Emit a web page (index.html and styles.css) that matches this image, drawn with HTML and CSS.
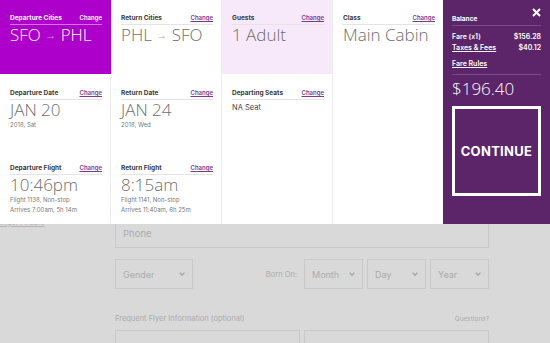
FILE: index.html
```html
<!DOCTYPE html>
<html lang="en">
<head>
    <meta charset="UTF-8">
    <meta name="viewport" content="width=device-width, initial-scale=1.0">
    <title>Trip Summary</title>
    <link rel="stylesheet" href="styles.css">
</head>
<body>
    <!-- Page underneath the summary -->
    <div class="page">
        <div class="side">
            <a class="lang-link">Settings: Arabic</a>
        </div>
        <div class="form">
            <div class="field">Phone</div>
            <div class="form-row">
                <div class="field select gender">Gender
                    <svg width="6" height="4" viewBox="0 0 6 4"><polyline points="0.6,0.6 3,3.2 5.4,0.6" fill="none" stroke="#a3a3a3" stroke-width="1.3"/></svg>
                </div>
                <span class="born">Born On:</span>
                <div class="field select date-select">Month
                    <svg width="6" height="4" viewBox="0 0 6 4"><polyline points="0.6,0.6 3,3.2 5.4,0.6" fill="none" stroke="#a3a3a3" stroke-width="1.3"/></svg>
                </div>
                <div class="field select date-select">Day
                    <svg width="6" height="4" viewBox="0 0 6 4"><polyline points="0.6,0.6 3,3.2 5.4,0.6" fill="none" stroke="#a3a3a3" stroke-width="1.3"/></svg>
                </div>
                <div class="field select date-select">Year
                    <svg width="6" height="4" viewBox="0 0 6 4"><polyline points="0.6,0.6 3,3.2 5.4,0.6" fill="none" stroke="#a3a3a3" stroke-width="1.3"/></svg>
                </div>
            </div>
            <div class="ff-head">
                <span class="ff-label">Frequent Flyer Information (optional)</span>
                <span class="ff-help">Questions?</span>
            </div>
            <div class="ff-row">
                <div class="field half"></div>
                <div class="field half"></div>
            </div>
        </div>
    </div>

    <!-- Trip summary overlay -->
    <div class="summary">
        <div class="trip-grid">
            <div class="cell cell-active">
                <div class="cell-head"><span class="cell-label">Departure Cities</span><a class="cell-change">Change</a></div>
                <div class="cell-value">SFO <span class="arrow">&rarr;</span> PHL</div>
            </div>
            <div class="cell">
                <div class="cell-head"><span class="cell-label">Return Cities</span><a class="cell-change">Change</a></div>
                <div class="cell-value">PHL <span class="arrow">&rarr;</span> SFO</div>
            </div>
            <div class="cell cell-soft">
                <div class="cell-head"><span class="cell-label">Guests</span><a class="cell-change">Change</a></div>
                <div class="cell-value">1 Adult</div>
            </div>
            <div class="cell">
                <div class="cell-head"><span class="cell-label">Class</span><a class="cell-change">Change</a></div>
                <div class="cell-value">Main Cabin</div>
            </div>

            <div class="cell">
                <div class="cell-head"><span class="cell-label">Departure Date</span><a class="cell-change">Change</a></div>
                <div class="cell-value">JAN 20</div>
                <div class="cell-note">2018, Sat</div>
            </div>
            <div class="cell">
                <div class="cell-head"><span class="cell-label">Return Date</span><a class="cell-change">Change</a></div>
                <div class="cell-value">JAN 24</div>
                <div class="cell-note">2018, Wed</div>
            </div>
            <div class="cell">
                <div class="cell-head"><span class="cell-label">Departing Seats</span><a class="cell-change">Change</a></div>
                <div class="cell-text">NA Seat</div>
            </div>
            <div class="cell"></div>

            <div class="cell">
                <div class="cell-head"><span class="cell-label">Departure Flight</span><a class="cell-change">Change</a></div>
                <div class="cell-value">10:46pm</div>
                <div class="cell-note">Flight 1138, Non-stop</div>
                <div class="cell-note">Arrives 7:00am, 5h 14m</div>
            </div>
            <div class="cell">
                <div class="cell-head"><span class="cell-label">Return Flight</span><a class="cell-change">Change</a></div>
                <div class="cell-value">8:15am</div>
                <div class="cell-note">Flight 1141, Non-stop</div>
                <div class="cell-note">Arrives 11:40am, 6h 25m</div>
            </div>
            <div class="cell"></div>
            <div class="cell"></div>
        </div>

        <aside class="balance">
            <div class="balance-head">
                <span class="balance-title">Balance</span>
                <svg class="close" width="9" height="9" viewBox="0 0 9 9"><path d="M1 1 L8 8 M8 1 L1 8" stroke="#fff" stroke-width="2"/></svg>
            </div>
            <div class="fares">
                <div class="fare-row"><span>Fare (x1)</span><span>$156.28</span></div>
                <div class="fare-row"><a class="fare-link">Taxes &amp; Fees</a><span>$40.12</span></div>
                <div class="fare-row fare-rules"><a class="fare-link">Fare Rules</a></div>
            </div>
            <div class="total">$196.40</div>
            <button class="continue">CONTINUE</button>
        </aside>
    </div>
</body>
</html>
```

FILE: styles.css
```css
/* Basic Reset */
* {
    margin: 0;
    padding: 0;
    box-sizing: border-box;
}

body {
    font-family: Inter, 'Open Sans', sans-serif;
    background: #d9d9d9;
    width: 550px;
    height: 343px;
    overflow: hidden;
    position: relative;
}

/* Page underneath */
.page {
    display: flex;
    padding-top: 218px;
}

.side {
    width: 115px;
    overflow: hidden;
}

.lang-link {
    display: block;
    margin-left: -15px;
    margin-top: -1px;
    font-size: 8px;
    line-height: 10px;
    color: #b3b3b3;
    text-decoration: underline;
    white-space: nowrap;
}

.form {
    width: 374px;
}

.field {
    height: 30px;
    border: 1px solid #c9c9c9;
    display: flex;
    align-items: center;
    padding: 0 7px;
    font-size: 9.5px;
    color: #ababab;
}

.select {
    justify-content: space-between;
    font-size: 9px;
}

.form-row {
    display: flex;
    align-items: center;
    gap: 4px;
    margin-top: 11px;
}

.gender {
    width: 78px;
    margin-right: auto;
}

.born {
    font-size: 7.5px;
    color: #acacac;
    margin-right: 3px;
}

.date-select {
    width: 59px;
}

.ff-head {
    display: flex;
    justify-content: space-between;
    align-items: baseline;
    margin-top: 25px;
    line-height: 10px;
    color: #acacac;
}

.ff-label {
    font-size: 7.5px;
}

.ff-help {
    font-size: 6.5px;
}

.ff-row {
    display: flex;
    gap: 4px;
    margin-top: 6px;
}

.half {
    width: 185px;
}

/* Summary overlay */
.summary {
    position: absolute;
    top: 0;
    left: 0;
    width: 550px;
    height: 224px;
    display: flex;
}

.trip-grid {
    width: 443px;
    display: grid;
    grid-template-columns: 111px 111px 111px 110px;
    grid-template-rows: 75px 75px 74px;
    background: #fff;
}

.cell {
    border-right: 1px solid #ececec;
    padding: 13px 8px 0 10px;
}

.cell:nth-child(4n) {
    border-right: none;
}

.cell-active {
    background: #ad00cb;
    border-right-color: #ad00cb;
    height: 74px;
}

.cell-soft {
    background: #f8e9fa;
    height: 74px;
}

.cell-head {
    display: flex;
    justify-content: space-between;
    align-items: baseline;
    line-height: 10px;
    padding-bottom: 1px;
    border-bottom: 1px solid #e4e4e4;
}

.cell-label {
    font-size: 6.5px;
    font-weight: 700;
    color: #3a3a3a;
}

.cell-change {
    font-size: 6px;
    font-weight: 600;
    color: #7c3b8e;
    text-decoration: underline;
}

.cell-active .cell-head {
    border-bottom-color: rgba(255, 255, 255, 0.45);
}

.cell-active .cell-label,
.cell-active .cell-change {
    color: #fff;
    text-decoration: none;
}

.cell-value {
    font-family: 'Open Sans', sans-serif;
    font-size: 17px;
    font-weight: 300;
    line-height: 20px;
    color: #6e6e6e;
    white-space: nowrap;
}

.cell-active .cell-value {
    color: #fff;
}

.arrow {
    font-size: 11px;
    color: #b0b0b0;
    vertical-align: 2px;
}

.cell-active .arrow {
    color: rgba(255, 255, 255, 0.6);
}

.cell-note {
    font-size: 6px;
    line-height: 10px;
    color: #7a7a7a;
    white-space: nowrap;
}

.cell-text {
    font-size: 7.5px;
    line-height: 12px;
    color: #444;
    margin-top: 2px;
}

/* Balance panel */
.balance {
    width: 107px;
    background: #5c2569;
    padding: 0 9px;
    color: #fff;
}

.balance-head {
    display: flex;
    justify-content: space-between;
    align-items: flex-start;
    padding-top: 8px;
    padding-bottom: 1px;
    border-bottom: 1px solid rgba(255, 255, 255, 0.18);
}

.balance-title {
    font-size: 6.5px;
    font-weight: 700;
    line-height: 10px;
    margin-top: 6px;
}

.fares {
    padding: 5px 0;
    border-bottom: 1px solid rgba(255, 255, 255, 0.18);
}

.fare-row {
    display: flex;
    justify-content: space-between;
    font-size: 7px;
    font-weight: 600;
    line-height: 11px;
}

.fare-link {
    text-decoration: underline;
}

.fare-rules {
    margin-top: 5px;
}

.total {
    font-family: 'Open Sans', sans-serif;
    font-size: 17px;
    font-weight: 300;
    line-height: 20px;
    margin-top: 4px;
}

.continue {
    display: flex;
    align-items: center;
    justify-content: center;
    width: 100%;
    height: 90px;
    margin-top: 7px;
    background: transparent;
    border: 3px solid #fff;
    color: #fff;
    font-family: inherit;
    font-size: 13px;
    font-weight: 700;
    letter-spacing: 0.3px;
}
```
